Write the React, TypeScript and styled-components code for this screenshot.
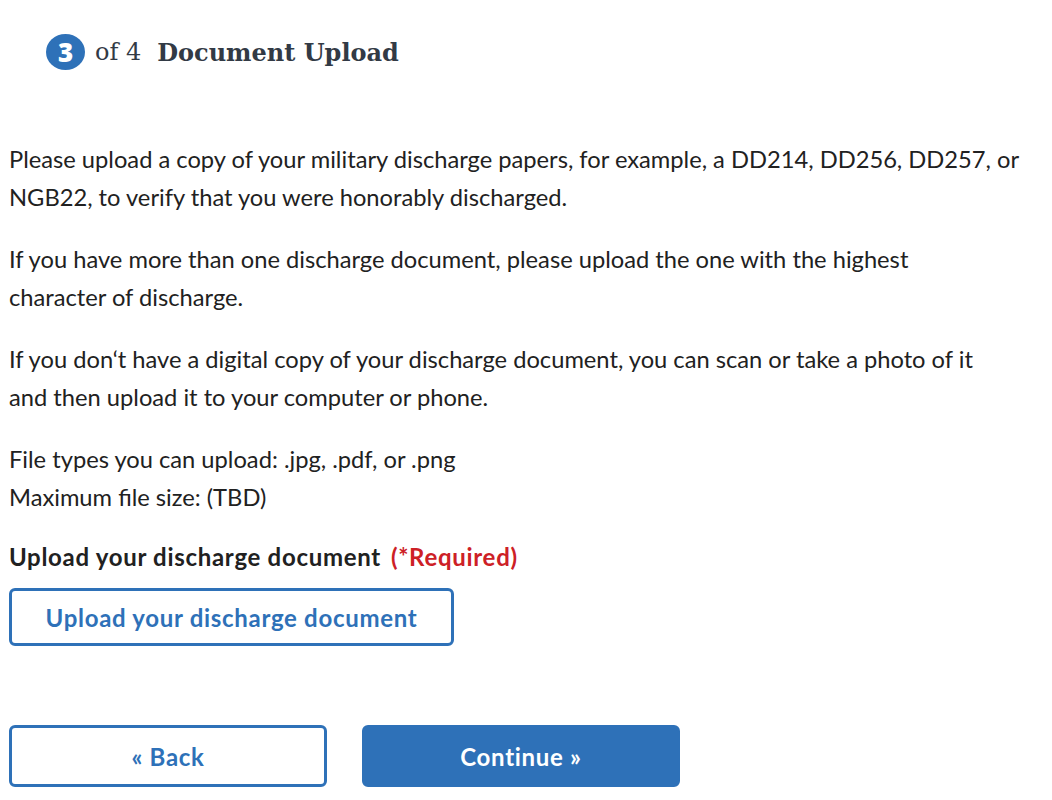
import React from "react";
import styled, { createGlobalStyle } from "styled-components";

const Global = createGlobalStyle`
  html, body { margin: 0; padding: 0; background: #ffffff; }
  body { font-family: "Lato", "Open Sans", sans-serif; color: #212121; }
`;

const Page = styled.div`
  width: 1052px;
  height: 800px;
  box-sizing: border-box;
  padding: 0 9px;
  overflow: hidden;
`;

const Header = styled.div`
  display: flex;
  align-items: center;
  height: 36px;
  margin-top: 34px;
  margin-left: 37px;
  margin-bottom: 70px;
`;

const StepCircle = styled.span`
  display: inline-flex;
  align-items: center;
  justify-content: center;
  width: 39px;
  height: 36px;
  border-radius: 50%;
  background: #2e71b8;
  color: #ffffff;
  font-family: "Open Sans", sans-serif;
  font-weight: 800;
  font-size: 26px;
  margin-right: 10px;
`;

const StepOf = styled.span`
  font-family: "DejaVu Serif", serif;
  font-size: 24px;
  color: #323a45;
  margin-right: 16px;
`;

const Title = styled.h2`
  margin: 0;
  font-family: "DejaVu Serif", serif;
  font-weight: 700;
  font-size: 24px;
  color: #323a45;
`;

const Para = styled.p`
  margin: 0 0 24px;
  font-size: 23.7px;
  line-height: 38px;
`;

const Label = styled.div`
  font-size: 24px;
  letter-spacing: 0.7px;
  line-height: 34px;
  font-weight: 700;
  color: #212121;
`;

const Required = styled.span`
  color: #cd2026;
  margin-left: 10px;
`;

const OutlineButton = styled.button<{ $w: number; $h: number }>`
  display: flex;
  align-items: center;
  justify-content: center;
  box-sizing: border-box;
  width: ${(p) => p.$w}px;
  height: ${(p) => p.$h}px;
  border: 3px solid #2e71b8;
  border-radius: 6px;
  background: #ffffff;
  color: #2e71b8;
  font-family: "Lato", sans-serif;
  font-weight: 700;
  font-size: 24px;
  letter-spacing: 0.7px;
  padding: 0;
`;

const FilledButton = styled(OutlineButton)`
  background: #2e71b8;
  color: #ffffff;
  border-color: #2e71b8;
`;

const UploadWrap = styled.div`
  margin-top: 14px;
`;

const NavRow = styled.div`
  display: flex;
  gap: 35px;
  margin-top: 79px;
`;

export default function App() {
  return (
    <>
      <Global />
      <Page>
        <Header>
          <StepCircle>3</StepCircle>
          <StepOf>of 4</StepOf>
          <Title>Document Upload</Title>
        </Header>
        <Para>
          Please upload a copy of your military discharge papers, for example, a DD214, DD256, DD257, or
          <br />
          NGB22, to verify that you were honorably discharged.
        </Para>
        <Para>
          If you have more than one discharge document, please upload the one with the highest
          <br />
          character of discharge.
        </Para>
        <Para>
          If you don‘t have a digital copy of your discharge document, you can scan or take a photo of it
          <br />
          and then upload it to your computer or phone.
        </Para>
        <Para>
          File types you can upload: .jpg, .pdf, or .png
          <br />
          Maximum file size: (TBD)
        </Para>
        <Label>
          Upload your discharge document<Required>(*Required)</Required>
        </Label>
        <UploadWrap>
          <OutlineButton $w={445} $h={58}>Upload your discharge document</OutlineButton>
        </UploadWrap>
        <NavRow>
          <OutlineButton $w={318} $h={62}>« Back</OutlineButton>
          <FilledButton $w={318} $h={62}>Continue »</FilledButton>
        </NavRow>
      </Page>
    </>
  );
}
